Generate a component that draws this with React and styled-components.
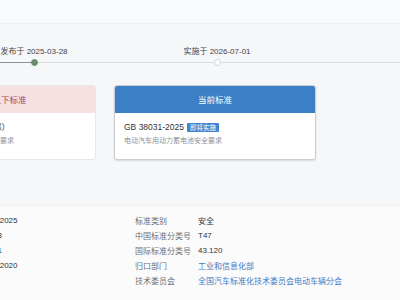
import React from "react";
import styled, { createGlobalStyle } from "styled-components";

const GlobalStyle = createGlobalStyle`
  html, body {
    margin: 0;
    padding: 0;
    background: #f6f7f9;
    overflow: hidden;
  }
  body {
    font-family: "Liberation Sans", "Noto Sans CJK SC", sans-serif;
    color: #333;
  }
`;

const Page = styled.div`
  width: 400px;
  height: 300px;
  overflow: hidden;
`;

const TopBar = styled.div`
  height: 23px;
  background: #fafbfc;
  border-bottom: 1px solid #eceef1;
`;

const Timeline = styled.div`
  position: relative;
  display: flex;
  margin-top: 23px;
  margin-left: -6px;

  &::before {
    content: "";
    position: absolute;
    left: 0;
    width: 420px;
    top: 15px;
    height: 1px;
    background: linear-gradient(to right, #8e9297 0 40px, #dcdee2 40px);
  }
`;

const Stop = styled.div`
  position: relative;
  width: 80px;
  flex: none;
  margin-left: ${(p) => p.$offset || 0}px;
  display: flex;
  flex-direction: column;
  align-items: center;
`;

const StopLabel = styled.div`
  font-size: 8px;
  line-height: 10px;
  white-space: nowrap;
  color: #444;
`;

const Dot = styled.span`
  margin-top: 1.5px;
  width: 7px;
  height: 7px;
  border-radius: 50%;
  box-sizing: border-box;
  background: ${(p) => (p.$done ? "#6b8e6d" : "#fff")};
  border: 1px solid ${(p) => (p.$done ? "#6b8e6d" : "#cfd2d6")};
`;

const Cards = styled.div`
  display: flex;
  gap: 18px;
  margin-top: 19px;
  margin-left: -94px;
`;

const Card = styled.div`
  width: ${(p) => p.$width}px;
  height: 75px;
  flex: none;
  background: #fff;
  border: 1px solid ${(p) => (p.$current ? "#c9ced4" : "#e6e8eb")};
  border-radius: 3px;
  box-sizing: border-box;
  overflow: hidden;
  box-shadow: ${(p) => (p.$current ? "0 1px 2px rgba(0,0,0,0.12)" : "none")};
`;

const CardHead = styled.div`
  height: 27px;
  display: flex;
  align-items: center;
  justify-content: center;
  font-size: 8.5px;
  background: ${(p) => (p.$current ? "#3b80c5" : "#f6e0e1")};
  color: ${(p) => (p.$current ? "#fff" : "#a84a5c")};
`;

const CardBody = styled.div`
  padding: 9px 9px 0;
`;

const Code = styled.div`
  display: flex;
  align-items: center;
  gap: 3px;
  font-size: 8.5px;
  line-height: 11px;
  color: #333;
`;

const Badge = styled.span`
  background: #3f86cf;
  color: #fff;
  font-size: 6.5px;
  line-height: 9px;
  padding: 0 3px;
  border-radius: 1px;
`;

const Sub = styled.div`
  margin-top: 3px;
  font-size: 7px;
  line-height: 10px;
  color: #8d939a;
  white-space: nowrap;
`;

const Panel = styled.div`
  margin-top: 45px;
  margin-left: -102px;
  width: 620px;
  height: 100px;
  background: #fbfbfc;
  border-top: 1px solid #eef0f2;
  padding-top: 7px;
  display: grid;
  grid-template-columns: 237px 1fr;
  align-content: start;
`;

const Column = styled.div`
  display: flex;
  flex-direction: column;
`;

const Row = styled.div`
  display: grid;
  grid-template-columns: 63px 1fr;
  height: 15px;
  align-items: center;
  font-size: 8px;
  white-space: nowrap;
`;

const Label = styled.span`
  color: #6a6f76;
`;

const Value = styled.span`
  color: ${(p) => (p.$link ? "#3d7ac4" : "#333")};
`;

const leftRows = [
  ["标准号", "GB 38031-2025"],
  ["发布日期", "2025-03-28"],
  ["实施日期", "2026-07-01"],
  ["代替标准", "GB 38031-2020"],
];

const rightRows = [
  ["标准类别", "安全"],
  ["中国标准分类号", "T47"],
  ["国际标准分类号", "43.120"],
  ["归口部门", "工业和信息化部", true],
  ["技术委员会", "全国汽车标准化技术委员会电动车辆分会", true],
];

function App() {
  return (
    <Page>
      <GlobalStyle />
      <TopBar />
      <Timeline>
        <Stop>
          <StopLabel>发布于 2025-03-28</StopLabel>
          <Dot $done />
        </Stop>
        <Stop $offset={103}>
          <StopLabel>实施于 2026-07-01</StopLabel>
          <Dot />
        </Stop>
        <Stop $offset={136}>
          <StopLabel>废止于 —</StopLabel>
        </Stop>
      </Timeline>
      <Cards>
        <Card $width={190}>
          <CardHead>代替以下标准</CardHead>
          <CardBody>
            <Code>GB 38031-2020（全部）</Code>
            <Sub>电动汽车用动力蓄电池安全要求</Sub>
          </CardBody>
        </Card>
        <Card $width={202} $current>
          <CardHead $current>当前标准</CardHead>
          <CardBody>
            <Code>
              GB 38031-2025 <Badge>即将实施</Badge>
            </Code>
            <Sub>电动汽车用动力蓄电池安全要求</Sub>
          </CardBody>
        </Card>
      </Cards>
      <Panel>
        <Column>
          {leftRows.map(([k, v]) => (
            <Row key={k}>
              <Label>{k}</Label>
              <Value>{v}</Value>
            </Row>
          ))}
        </Column>
        <Column>
          {rightRows.map(([k, v, link]) => (
            <Row key={k}>
              <Label>{k}</Label>
              <Value $link={link}>{v}</Value>
            </Row>
          ))}
        </Column>
      </Panel>
    </Page>
  );
}

export default App;
